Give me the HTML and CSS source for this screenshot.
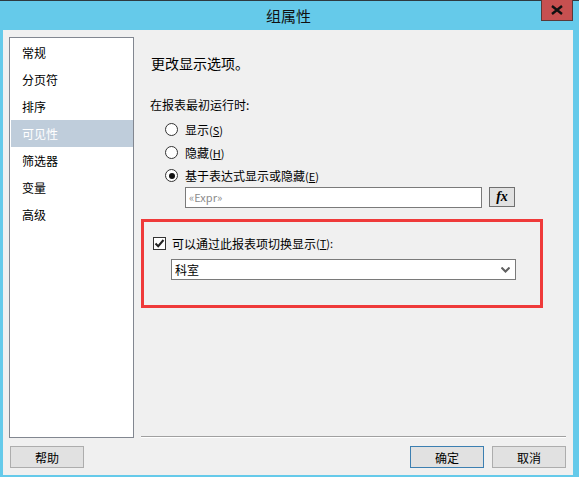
FILE: index.html
```html
<!DOCTYPE html>
<html lang="zh-CN">
<head>
    <meta charset="UTF-8">
    <title>组属性</title>
    <link rel="stylesheet" href="styles.css">
</head>
<body>
    <div class="window">
        <div class="titlebar">
            <span class="title">组属性</span>
            <div class="close-btn">
                <svg width="12" height="10" viewBox="0 0 12 10"><path d="M1 1 L11 9 M11 1 L1 9" stroke="#111" stroke-width="2.4"/></svg>
            </div>
        </div>

        <div class="client">
            <div class="main">
                <ul class="nav-list">
                    <li>常规</li>
                    <li>分页符</li>
                    <li>排序</li>
                    <li class="selected">可见性</li>
                    <li>筛选器</li>
                    <li>变量</li>
                    <li>高级</li>
                </ul>

                <div class="panel">
                    <div class="heading">更改显示选项。</div>
                    <div class="label">在报表最初运行时:</div>

                    <div class="radio-row"><span class="radio"></span>显示<span class="key">(<u>S</u>)</span></div>
                    <div class="radio-row"><span class="radio"></span>隐藏<span class="key">(<u>H</u>)</span></div>
                    <div class="radio-row"><span class="radio checked"></span>基于表达式显示或隐藏<span class="key">(<u>E</u>)</span></div>

                    <div class="expr-row">
                        <div class="textbox">«Expr»</div>
                        <div class="fx-btn">fx</div>
                    </div>

                    <div class="check-row">
                        <span class="checkbox">
                            <svg width="11" height="11" viewBox="0 0 11 11"><path d="M1.5 5.5 L4.2 8.2 L9.5 2" fill="none" stroke="#222" stroke-width="2"/></svg>
                        </span>
                        可以通过此报表项切换显示<span class="key">(<u>T</u>):</span>
                    </div>

                    <div class="combo">
                        <span>科室</span>
                        <svg width="9" height="6" viewBox="0 0 9 6"><path d="M0.5 0.5 L4.5 4.5 L8.5 0.5" fill="none" stroke="#606060" stroke-width="2"/></svg>
                    </div>

                    <div class="highlight-box"></div>
                    <div class="separator"></div>
                </div>
            </div>

            <div class="footer">
                <button class="btn">帮助</button>
                <div class="footer-right">
                    <button class="btn default">确定</button>
                    <button class="btn">取消</button>
                </div>
            </div>
        </div>
    </div>
</body>
</html>
```

FILE: styles.css
```css
body {
    margin: 0;
    padding: 0;
    font-family: "Noto Sans CJK SC", "Noto Sans", sans-serif;
    font-size: 12px;
    color: #000;
    background-color: #65caea;
}

.window {
    width: 579px;
    height: 477px;
    background-color: #65caea;
    position: relative;
}

.titlebar {
    height: 29px;
    border-top: 1px solid #2e3a40;
    display: flex;
    align-items: center;
    justify-content: center;
}

.title {
    font-size: 15px;
    color: #111;
    margin-left: -2px;
}

.close-btn {
    position: absolute;
    top: 0;
    left: 541px;
    width: 30px;
    height: 20px;
    background-color: #c75050;
    border: 1px solid #5a3838;
    border-top: none;
    display: flex;
    align-items: center;
    justify-content: center;
}

.client {
    margin: 0 6px 0 3px;
    height: 445px;
    background-color: #f0f0f0;
    padding: 7px 7px 0 6px;
    box-sizing: border-box;
}

.main {
    display: flex;
    height: 401px;
    gap: 7px;
}

/* left navigation list */
.nav-list {
    list-style: none;
    margin: 0;
    padding: 1px 0 0 1px;
    width: 125px;
    box-sizing: border-box;
    background-color: #fff;
    border: 1px solid #828790;
}

.nav-list li {
    height: 27px;
    line-height: 27px;
    padding-left: 11px;
    font-size: 12px;
}

.nav-list li.selected {
    background-color: #bfcddb;
    color: #fff;
}

/* right panel */
.panel {
    flex: 1;
    position: relative;
    display: flex;
    flex-direction: column;
}

.heading {
    font-size: 14px;
    line-height: 20px;
    margin: 16px 0 0 10px;
}

.label {
    line-height: 16px;
    margin: 24px 0 0 9px;
}

.radio-row {
    display: flex;
    align-items: center;
    height: 23px;
    margin-left: 24px;
}

.radio-row:first-of-type {
    margin-top: 5px;
}

.label + .radio-row {
    margin-top: 5px;
}

.radio {
    width: 11px;
    height: 11px;
    border: 1px solid #333;
    border-radius: 50%;
    background-color: #fff;
    margin-right: 7px;
    display: flex;
    align-items: center;
    justify-content: center;
}

.radio.checked::after {
    content: "";
    width: 6px;
    height: 6px;
    border-radius: 50%;
    background-color: #111;
}

.key {
    font-size: 11px;
}

.expr-row {
    display: flex;
    align-items: flex-start;
    margin-left: 44px;
    gap: 7px;
}

.textbox {
    width: 297px;
    height: 21px;
    box-sizing: border-box;
    border: 1px solid #7a7a7a;
    background-color: #fff;
    color: #8c8c8c;
    font-size: 11px;
    line-height: 19px;
    padding-left: 3px;
}

.fx-btn {
    width: 26px;
    height: 20px;
    box-sizing: border-box;
    border: 1px solid #707070;
    background-color: #e1e1e1;
    font-family: "Liberation Serif", serif;
    font-style: italic;
    font-weight: bold;
    font-size: 14px;
    line-height: 17px;
    text-align: center;
}

.check-row {
    display: flex;
    align-items: center;
    height: 16px;
    margin: 27px 0 0 12px;
}

.checkbox {
    width: 11px;
    height: 11px;
    border: 1px solid #333;
    background-color: #fff;
    margin-right: 6px;
    display: flex;
    align-items: center;
    justify-content: center;
}

.combo {
    margin: 8px 0 0 30px;
    width: 345px;
    height: 21px;
    box-sizing: border-box;
    border: 1px solid #7a7a7a;
    background-color: #fff;
    display: flex;
    align-items: center;
    justify-content: space-between;
    padding: 0 5px 0 3px;
    font-size: 12px;
}

/* red annotation frame */
.highlight-box {
    position: absolute;
    left: 0;
    top: 182px;
    width: 402px;
    height: 89px;
    box-sizing: border-box;
    border: 3px solid #ef3a3a;
}

.separator {
    margin-top: auto;
    height: 1px;
    background-color: #a0a0a0;
    border-bottom: 1px solid #fff;
}

.footer {
    display: flex;
    justify-content: space-between;
    margin-top: 8px;
    padding-left: 1px;
}

.footer-right {
    display: flex;
    gap: 8px;
}

.btn {
    width: 74px;
    height: 22px;
    padding: 0;
    border: 1px solid #adadad;
    background-color: #e1e1e1;
    font-family: "Noto Sans CJK SC", "Noto Sans", sans-serif;
    font-size: 12px;
    color: #000;
}

.btn.default {
    border-color: #3c7fb1;
}
```
